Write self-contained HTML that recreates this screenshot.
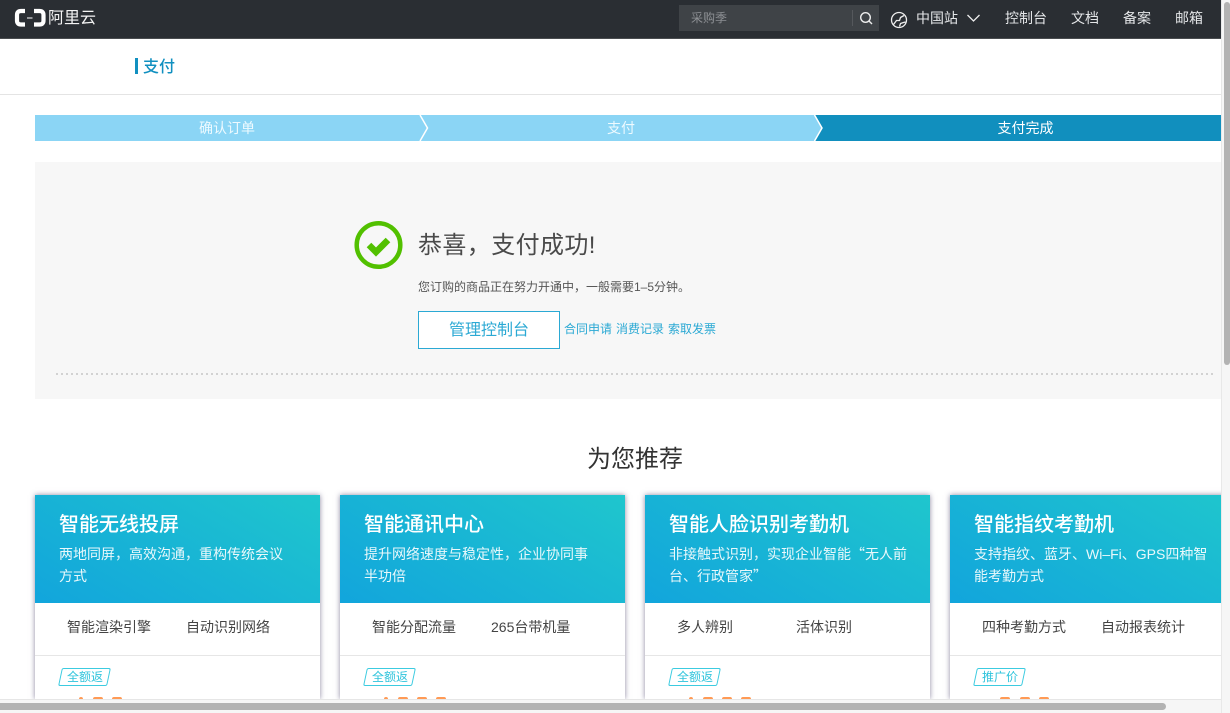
<!DOCTYPE html>
<html lang="zh"><head><meta charset="utf-8"><title>支付</title>
<style>
html,body{margin:0;padding:0;width:1230px;height:713px;overflow:hidden;background:#fff}
body{position:relative;font-family:"Liberation Sans","Noto Sans CJK SC",sans-serif;color:#444}
.a{position:absolute;white-space:nowrap}
.nav{color:#e4e6e8;font-size:14px;line-height:20px;top:8px}
.step{top:115px;height:26px;line-height:26px;font-size:14px;color:#fff;text-align:center}
.card{position:absolute;top:495px;width:285px;height:204px;background:#fff;box-shadow:0 0 5px rgba(80,70,110,.65);overflow:hidden}
.hd{position:absolute;left:0;top:0;width:285px;height:108px;background:linear-gradient(30deg,#12a5dc,#1fc6cd);color:#fff}
.hd b{position:absolute;left:24px;top:17px;font-size:20px;font-weight:500;line-height:26px;white-space:nowrap}
.hd p{position:absolute;left:24px;top:48px;margin:0;white-space:nowrap;font-size:14px;line-height:22px;color:#e9f8fb}
.q{font-family:"Noto Sans CJK SC",sans-serif}
.f{position:absolute;top:121px;font-size:14px;line-height:22px;color:#444;white-space:nowrap}
.ln{position:absolute;left:0;top:160px;width:285px;height:1px;background:#e6e6e6}
.tag{position:absolute;left:25px;top:173px;width:47px;height:16px;border:1px solid #3ccbe0;border-radius:2px;transform:skewX(-12deg)}
.tt{position:absolute;left:26px;top:173px;width:48px;text-align:center;font-size:12px;line-height:18px;color:#2fc4dc}
.p{position:absolute;top:202px;height:2px;width:10px;background:#ff9a55;border-radius:5px 5px 0 0}
</style></head><body>

<div class="a" style="left:0;top:0;width:1221px;height:39px;background:#2a2e33;border-bottom:1px solid #4a4d50;box-sizing:border-box"></div>
<svg class="a" style="left:14px;top:8px" width="34" height="20" viewBox="0 0 34 20" fill="none" stroke="#fff">
<path d="M11 3H7Q3 3 3 7V12.500Q3 16.500 7 16.500H11" stroke-width="4.200"/>
<path d="M20 3H25.500Q29.500 3 29.500 7V12.500Q29.500 16.500 25.500 16.500H20" stroke-width="4.200"/>
<path d="M13 10H18.500" stroke-width="1"/></svg>
<div class="a" style="left:48px;top:7px;font-size:16px;line-height:24px;color:#f4f4f4">阿里云</div>

<div class="a" style="left:679px;top:5px;width:200px;height:26px;background:#3f4347"></div>
<div class="a" style="left:691px;top:8px;font-size:12px;line-height:20px;color:#8d9094">采购季</div>
<div class="a" style="left:852px;top:10px;width:1px;height:16px;background:#55585c"></div>
<svg class="a" style="left:858px;top:10px" width="16" height="16" viewBox="0 0 16 16" fill="none" stroke="#eee" stroke-width="1.400"><circle cx="7.500" cy="7.500" r="4.800"/><path d="M11 11L14 14"/></svg>
<svg class="a" style="left:890px;top:11px" width="18" height="18" viewBox="0 0 18 18" fill="none" stroke="#eee" stroke-width="1.300"><circle cx="9" cy="9" r="7.500"/><path d="M3.500 13.500L6.500 9.500H9.500L10.500 6.500L14 4.500M9.500 15.500L10.500 12.500L13.500 11.500L15.500 11"/></svg>
<div class="a nav" style="left:916px">中国站</div>
<svg class="a" style="left:966px;top:13px" width="15" height="10" viewBox="0 0 15 10" fill="none" stroke="#eee" stroke-width="1.300"><path d="M1.500 2L7.500 8L13.500 2"/></svg>
<div class="a nav" style="left:1005px">控制台</div>
<div class="a nav" style="left:1071px">文档</div>
<div class="a nav" style="left:1123px">备案</div>
<div class="a nav" style="left:1175px">邮箱</div>

<div class="a" style="left:135px;top:58px;width:3px;height:16px;background:#1190c0"></div>
<div class="a" style="left:143px;top:56px;font-size:16px;font-weight:500;line-height:24px;color:#1190c0">支付</div>
<div class="a" style="left:0;top:94px;width:1221px;height:1px;background:#e4e4e4"></div>

<div class="a" style="left:35px;top:115px;width:1186px;height:26px;background:#8bd5f5"></div>
<div class="a" style="left:815px;top:115px;width:406px;height:26px;background:#118fbe"></div>
<svg class="a" style="left:415px;top:115px" width="14" height="26" viewBox="0 0 14 26" fill="none" stroke="#fff" stroke-width="1.500"><path d="M5 0L12.500 13L5 26"/></svg>
<svg class="a" style="left:808px;top:115px" width="16" height="26" viewBox="0 0 16 26"><path d="M6 0L13.500 13L6 26H0V0Z" fill="#8bd5f5"/><path d="M6.500 0L14 13L6.500 26" fill="none" stroke="#fff" stroke-width="1.500"/></svg>
<div class="a step" style="left:35px;width:384px;color:#eefaff">确认订单</div>
<div class="a step" style="left:428px;width:386px;color:#eefaff">支付</div>
<div class="a step" style="left:830px;width:391px">支付完成</div>

<div class="a" style="left:35px;top:162px;width:1186px;height:237px;background:#f7f7f7"></div>
<svg class="a" style="left:354px;top:220px" width="50" height="50" viewBox="0 0 50 50" fill="none"><circle cx="24.500" cy="25" r="21.800" stroke="#52c000" stroke-width="4.500"/><path d="M15 25L22 32L34 20" stroke="#52c000" stroke-width="6.500"/></svg>
<div class="a" style="left:418px;top:228px;font-size:24px;line-height:36px;color:#4a4a4a;letter-spacing:.4px">恭喜，支付成功!</div>
<div class="a" style="left:418px;top:277px;font-size:12px;line-height:20px;color:#555">您订购的商品正在努力开通中，一般需要1–5分钟。</div>
<div class="a" style="left:418px;top:311px;width:142px;height:38px;box-sizing:border-box;border:1px solid #2ba9d4;background:#fff;color:#2ba9d4;font-size:16px;line-height:38px;text-align:center">管理控制台</div>
<div class="a" style="left:564px;top:319px;font-size:12px;line-height:20px;color:#2ba9d4">合同申请</div>
<div class="a" style="left:616px;top:319px;font-size:12px;line-height:20px;color:#2ba9d4">消费记录</div>
<div class="a" style="left:668px;top:319px;font-size:12px;line-height:20px;color:#2ba9d4">索取发票</div>
<div class="a" style="left:56px;top:373px;width:1159px;height:2px;background:repeating-linear-gradient(90deg,#d2d2d2 0 2px,transparent 2px 5px)"></div>

<div class="a" style="left:587px;top:443px;font-size:24px;line-height:34px;color:#333">为您推荐</div>

<div class="card" style="left:35px"><div class="hd"><b>智能无线投屏</b><p>两地同屏，高效沟通，重构传统会议<br>方式</p></div>
<div class="f" style="left:32px">智能渲染引擎</div><div class="f" style="left:151px">自动识别网络</div><div class="ln"></div><div class="tag"></div><div class="tt">全额返</div>
<div class="p" style="left:44px;width:4px"></div><div class="p" style="left:58px"></div><div class="p" style="left:77px"></div></div>

<div class="card" style="left:340px"><div class="hd"><b>智能通讯中心</b><p>提升网络速度与稳定性，企业协同事<br>半功倍</p></div>
<div class="f" style="left:32px">智能分配流量</div><div class="f" style="left:151px">265台带机量</div><div class="ln"></div><div class="tag"></div><div class="tt">全额返</div>
<div class="p" style="left:44px;width:4px"></div><div class="p" style="left:58px"></div><div class="p" style="left:77px"></div><div class="p" style="left:96px"></div></div>

<div class="card" style="left:645px"><div class="hd"><b>智能人脸识别考勤机</b><p>非接触式识别，实现企业智能<span class="q">“</span>无人前<br>台、行政管家<span class="q">”</span></p></div>
<div class="f" style="left:32px">多人辨别</div><div class="f" style="left:151px">活体识别</div><div class="ln"></div><div class="tag"></div><div class="tt">全额返</div>
<div class="p" style="left:44px;width:4px"></div><div class="p" style="left:58px"></div><div class="p" style="left:77px"></div><div class="p" style="left:96px"></div></div>

<div class="card" style="left:950px"><div class="hd"><b>智能指纹考勤机</b><p>支持指纹、蓝牙、Wi–Fi、GPS四种智<br>能考勤方式</p></div>
<div class="f" style="left:32px">四种考勤方式</div><div class="f" style="left:151px">自动报表统计</div><div class="ln"></div><div class="tag"></div><div class="tt">推广价</div>
<div class="p" style="left:50px"></div><div class="p" style="left:70px"></div><div class="p" style="left:89px"></div></div>

<div class="a" style="left:1221px;top:0;width:9px;height:713px;background:#f6f6f6;border-left:1px solid #e8e8e8;box-sizing:border-box"></div>
<div class="a" style="left:1224px;top:2px;width:6px;height:363px;background:#b3b3b3;border-radius:3px"></div>
<div class="a" style="left:0;top:699px;width:1221px;height:14px;background:#f6f6f6;border-top:1px solid #e6e6e6;box-sizing:border-box"></div>
<div class="a" style="left:0;top:703px;width:1166px;height:7px;background:#b3b3b3;border-radius:0 4px 4px 0"></div>
</body></html>
